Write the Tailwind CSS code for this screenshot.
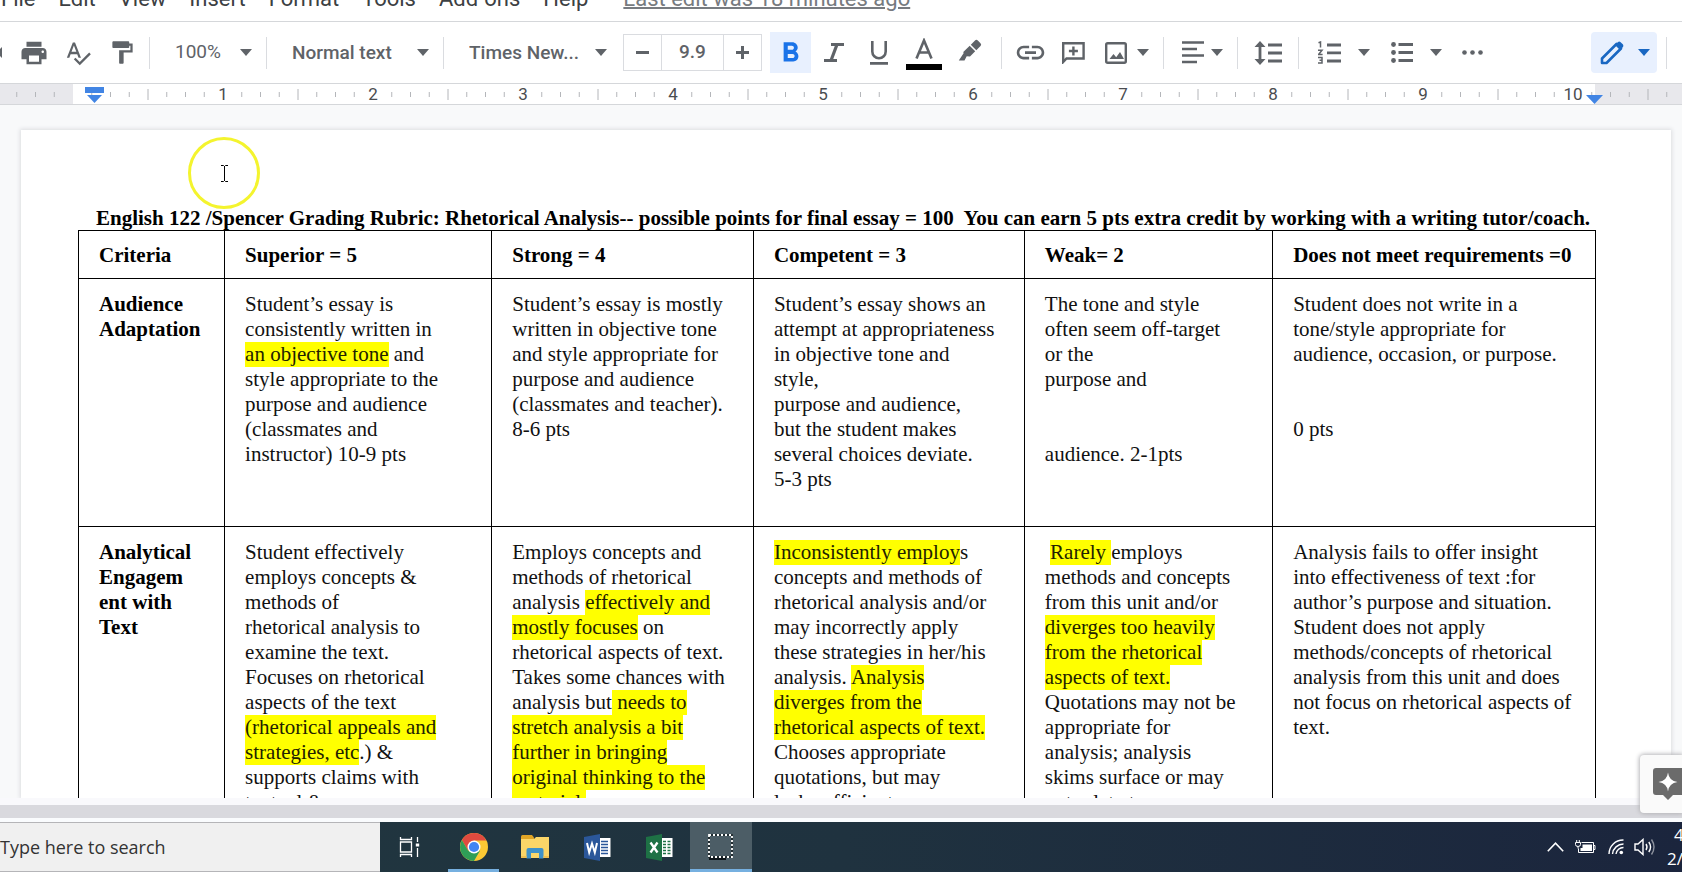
<!DOCTYPE html>
<html lang="en">
<head>
<meta charset="utf-8">
<title>Grading Rubric</title>
<script src="https://cdn.jsdelivr.net/npm/@tailwindcss/browser@4"></script>
</head>
<body class="h-screen overflow-hidden flex flex-col bg-white font-['Roboto',sans-serif] text-[#5f6368]">

<svg class="hidden">
  <symbol id="caret" viewBox="0 0 12 7"><path d="M0 0h12L6 7z" fill="currentColor"/></symbol>
</svg>

<!-- Menu bar -->
<nav class="h-[22px] shrink-0 overflow-hidden flex items-end gap-[23px] pl-px pb-[11px] border-b border-[#d5d7da] text-[22px] leading-[22px] text-[#3c4043] whitespace-nowrap">
  <button>File</button><button>Edit</button><button>View</button><button>Insert</button><button>Format</button><button>Tools</button><button>Add-ons</button><button>Help</button>
  <a href="#" class="ml-3 text-[#777b80] underline decoration-2">Last edit was 18 minutes ago</a>
</nav>

<!-- Toolbar -->
<div class="h-[62px] shrink-0 flex items-center border-b border-[#d5d7da] text-[19px]">
  <button class="w-3 h-10 flex items-center" aria-label="Redo"><svg class="w-[3px] h-3" viewBox="0 0 3 12" fill="currentColor"><path d="M2 0v11L0 9V2z"/></svg></button>
  <button class="w-11 h-10 grid place-items-center" aria-label="Print"><svg class="size-[30px]" viewBox="0 0 24 24" fill="currentColor"><path d="M19 8H5c-1.660 0-3 1.340-3 3v6h4v4h12v-4h4v-6c0-1.660-1.340-3-3-3zm-3 11H8v-5h8v5zm3-7c-.55 0-1-.45-1-1s.45-1 1-1 1 .45 1 1-.45 1-1 1zm-1-9H6v4h12V3z"/></svg></button>
  <button class="w-11 h-10 grid place-items-center" aria-label="Spelling"><svg class="size-7" viewBox="0 0 24 24" fill="currentColor"><path d="M12.450 16h2.090L9.430 3H7.570L2.460 16h2.090l1.120-3h5.640l1.140 3zm-6.020-5L8.500 5.480 10.570 11H6.430zm15.160.590l-8.090 8.090L9.830 16l-1.410 1.410 5.090 5.090L23 13l-1.410-1.410z"/></svg></button>
  <button class="w-11 h-10 grid place-items-center" aria-label="Paint format"><svg class="size-[27px]" viewBox="0 0 24 24" fill="currentColor"><path d="M18 4V3c0-.55-.45-1-1-1H4c-.55 0-1 .45-1 1v4c0 .55.45 1 1 1h13c.55 0 1-.45 1-1V6h1v4H9v11c0 .55.450 1 1 1h2c.55 0 1-.45 1-1v-9h8V4h-3z"/></svg></button>
  <i class="w-px h-8 mx-[5px] bg-[#dadce0]"></i>
  <label class="relative w-[106px] flex items-center">
    <select aria-label="Zoom" class="w-full h-10 pl-5 appearance-none bg-transparent"><option>100%</option></select>
    <svg class="absolute right-[9px] w-3 h-[7px] pointer-events-none"><use href="#caret"/></svg>
  </label>
  <i class="w-px h-8 mx-[5px] bg-[#dadce0]"></i>
  <label class="relative w-[166px] flex items-center">
    <select aria-label="Styles" class="w-full h-10 pl-5 pt-0.5 appearance-none bg-transparent font-medium"><option>Normal text</option></select>
    <svg class="absolute right-[9px] w-3 h-[7px] pointer-events-none"><use href="#caret"/></svg>
  </label>
  <i class="w-px h-8 mx-[5px] bg-[#dadce0]"></i>
  <label class="relative w-[167px] flex items-center">
    <select aria-label="Font" class="w-full h-10 pl-5 pt-0.5 appearance-none bg-transparent font-medium"><option>Times New...</option></select>
    <svg class="absolute right-[9px] w-3 h-[7px] pointer-events-none"><use href="#caret"/></svg>
  </label>
  <div class="ml-[7px] w-[139px] h-[37px] flex border border-[#dadce0]">
    <button class="w-[37px] grid place-items-center" aria-label="Decrease font size"><svg class="size-[13px]" viewBox="0 0 13 13"><path d="M0 6.500h13" stroke="currentColor" stroke-width="3"/></svg></button>
    <input aria-label="Font size" value="9.9" class="min-w-0 flex-1 text-center font-medium border-x border-[#dadce0]">
    <button class="w-[37px] grid place-items-center" aria-label="Increase font size"><svg class="size-[13px]" viewBox="0 0 13 13"><path d="M0 6.500h13M6.500 0v13" stroke="currentColor" stroke-width="3"/></svg></button>
  </div>
  <button class="ml-2 w-[41px] h-[41px] grid place-items-center bg-[#e8f0fe] text-[#1a73e8]" aria-label="Bold"><svg class="size-[33px]" viewBox="0 0 24 24" fill="currentColor"><path d="M15.600 11.290c.970-.67 1.650-1.770 1.650-2.790 0-2.260-1.750-4-4-4H7v14h7.040c2.090 0 3.710-1.700 3.710-3.790 0-1.520-.86-2.820-2.150-3.420zM10 7h3c.830 0 1.500.67 1.500 1.500S13.830 10 13 10h-3V7zm3.500 9H10v-3h3.500c.83 0 1.500.67 1.500 1.500s-.67 1.500-1.500 1.500z"/></svg></button>
  <button class="w-[46px] h-10 grid place-items-center" aria-label="Italic"><svg class="w-5 h-[19px]" viewBox="0 0 20 19"><path d="M7 1.500h13M0 17.500h13M13 1.500L7 17.500" stroke="currentColor" stroke-width="3.200"/></svg></button>
  <button class="w-11 h-10 grid place-items-center" aria-label="Underline"><svg class="w-5 h-6" viewBox="0 0 20 24" fill="none" stroke="currentColor" stroke-width="2.600"><path d="M3.300 0v10.500a6.700 6.700 0 0 0 13.400 0V0M1 22.400h18"/></svg></button>
  <button class="w-[46px] h-10 pt-0.5 grid place-items-center" aria-label="Text color"><svg class="w-9 h-8" viewBox="0 0 36 32"><path d="M10.500 20.500L18 2.500l7.500 18M13 14.500h10" fill="none" stroke="currentColor" stroke-width="2.600"/><path d="M0 26h36v6H0z" fill="#000"/></svg></button>
  <button class="w-[46px] h-10 pb-1 grid place-items-center" aria-label="Highlight color"><svg class="w-6 h-[26px]" viewBox="0 0 24 26" fill="currentColor"><path d="M17 2.500a2 2 0 0 1 2.800 0l2.700 2.700a2 2 0 0 1 0 2.800l-4.200 4.200-5.500-5.500zM11.700 7.800l5.500 5.500-5.200 5.200-3.300-.2L6.500 22.500H.8l4.800-7.300-.3-1.200z"/></svg></button>
  <i class="w-px h-8 ml-2 mr-[6px] bg-[#dadce0]"></i>
  <button class="w-11 h-10 grid place-items-center" aria-label="Insert link"><svg class="size-[33px]" viewBox="0 0 24 24" fill="currentColor"><path d="M3.900 12c0-1.710 1.390-3.100 3.100-3.100h4V7H7c-2.760 0-5 2.240-5 5s2.240 5 5 5h4v-1.900H7c-1.710 0-3.100-1.390-3.100-3.100zM8 13h8v-2H8v2zm9-6h-4v1.900h4c1.710 0 3.100 1.390 3.100 3.100s-1.390 3.100-3.100 3.100h-4V17h4c2.760 0 5-2.240 5-5s-2.240-5-5-5z"/></svg></button>
  <button class="w-[42px] h-10 grid place-items-center" aria-label="Add comment"><svg class="w-[23px] h-[22px]" viewBox="0 0 23 22" fill="none" stroke="currentColor" stroke-width="2.400"><path d="M1.200 20V1.200h20.400v15.300H4.500z"/><path d="M11.400 4.500v9M6.900 9h9"/></svg></button>
  <button class="w-[65px] h-10 flex items-center gap-[10px] pl-[11px]" aria-label="Insert image"><svg class="size-[22px]" viewBox="0 0 22 22" fill="none" stroke="currentColor" stroke-width="2.400"><rect x="1.200" y="1.200" width="19.600" height="19.600" rx="1.500"/><path d="M4.500 17l4-5 2.700 3.200L15 10l4 7z" fill="currentColor" stroke="none"/></svg><svg class="w-3 h-[7px]"><use href="#caret"/></svg></button>
  <i class="w-px h-8 ml-1 mr-[5px] bg-[#dadce0]"></i>
  <button class="w-16 h-10 flex items-center gap-[7px] pl-[13px]" aria-label="Align"><svg class="w-[22px] h-[23px]" viewBox="0 0 22 23" stroke="currentColor" stroke-width="2.500"><path d="M0 1.500h22M0 8h15M0 14.500h22M0 21h15"/></svg><svg class="w-3 h-[7px]"><use href="#caret"/></svg></button>
  <i class="w-px h-8 mx-1 bg-[#dadce0]"></i>
  <button class="w-[52px] h-10 grid place-items-center" aria-label="Line spacing"><svg class="w-7 h-6" viewBox="0 0 28 24" stroke="currentColor" stroke-width="2.800" fill="none"><path d="M14 4h14M14 12h14M14 20h14M6 4v16"/><path d="M6 0l5.500 6H.5zM6 24l5.500-6H.5z" fill="currentColor" stroke="none"/></svg></button>
  <i class="w-px h-8 mx-1 bg-[#dadce0]"></i>
  <button class="w-[76px] h-10 flex items-center gap-[17px] pl-[15px]" aria-label="Numbered list"><svg class="w-[23px] h-[23px]" viewBox="0 0 23 23" fill="none" stroke="currentColor"><path d="M9 4h14M9 11.800h14M9 20h14" stroke-width="2.800"/><path d="M.5 1.800l2-.8v5.500M0 9.300h4L.6 13.500h4M0 16.500h4v5.500H0M1.500 19.200H4" stroke-width="1.500"/></svg><svg class="w-3 h-[7px]"><use href="#caret"/></svg></button>
  <button class="w-[72px] h-10 flex items-center gap-[17px] pl-3" aria-label="Bulleted list"><svg class="w-[22px] h-[23px]" viewBox="0 0 22 23"><path d="M7.500 3.500H22M7.500 11.500H22M7.500 19.500H22" stroke="currentColor" stroke-width="2.800"/><g fill="currentColor"><circle cx="2.500" cy="3.500" r="2.400"/><circle cx="2.500" cy="11.500" r="2.400"/><circle cx="2.500" cy="19.500" r="2.400"/></g></svg><svg class="w-3 h-[7px]"><use href="#caret"/></svg></button>
  <button class="w-[42px] h-10 grid place-items-center" aria-label="More"><svg class="w-[21px] h-[5px]" viewBox="0 0 21 5" fill="currentColor"><circle cx="2.500" cy="2.500" r="2.300"/><circle cx="10.500" cy="2.500" r="2.300"/><circle cx="18.500" cy="2.500" r="2.300"/></svg></button>
  <button class="ml-auto w-[66px] h-[41px] flex items-center gap-[14px] pl-[9px] rounded bg-[#e8f0fe] text-[#1967c2]" aria-label="Editing mode"><svg class="size-6" viewBox="0 0 24 24"><path d="M2 22v-4.500L16.500 3 21 7.500 6.500 22z" fill="none" stroke="currentColor" stroke-width="2.600" stroke-linejoin="round"/><path d="M15 4l3-3q1.200-.8 2.400 0l2.600 2.600q.8 1.200 0 2.400l-3 3z" fill="currentColor"/></svg><svg class="w-3 h-[7px]"><use href="#caret"/></svg></button>
  <i class="w-px h-8 ml-[9px] mr-[15px] bg-[#dadce0]"></i>
</div>

<!-- Ruler -->
<div class="relative h-[21px] shrink-0 flex border-b border-[#d5d7da] bg-white overflow-hidden text-[17px] leading-[21px] text-[#4a4c50]">
  <div class="w-[73px] shrink-0 bg-[#e8e8ec]"></div>
  <div class="flex-1"></div>
  <div class="w-[87px] shrink-0 bg-[#e8e8ec]"></div>
  <svg class="absolute inset-0 w-full h-full">
    <defs><pattern id="ticks" x="73" width="150" height="21" patternUnits="userSpaceOnUse"><path d="M18.750 8v5M37.500 8v5M56.250 8v5M93.750 8v5M112.500 8v5M131.250 8v5M75 5v11" stroke="#b4b6ba"/></pattern></defs>
    <rect width="100%" height="21" fill="url(#ticks)"/>
  </svg>
  <div class="absolute left-[148px] top-0 flex text-center">
    <span class="w-[150px]">1</span><span class="w-[150px]">2</span><span class="w-[150px]">3</span><span class="w-[150px]">4</span><span class="w-[150px]">5</span><span class="w-[150px]">6</span><span class="w-[150px]">7</span><span class="w-[150px]">8</span><span class="w-[150px]">9</span><span class="w-[150px]">10</span>
  </div>
  <svg class="absolute left-[85px] top-[3px] w-[19px] h-4" viewBox="0 0 19 16" fill="#4285e4"><path d="M0 0h19v6H0zM2 8h15l-7.500 8z"/></svg>
  <svg class="absolute right-[79px] top-[11px] w-[17px] h-[9px]" viewBox="0 0 17 9" fill="#4285e4"><path d="M0 0h17L8.500 9z"/></svg>
</div>

<!-- Document -->
<main class="relative flex-1 min-h-0 overflow-hidden bg-[#f8f9fa] pt-[25px] pl-[21px] pr-[11px]">
  <article class="h-full bg-white shadow-[0_0_4px_1px_#dcdde0] pt-[76px] pl-[57px] pr-[75px] font-['Liberation_Serif',serif] text-[21px] leading-[25px] text-[#111]">
    <h1 class="pl-[18px] h-6 font-bold whitespace-pre text-black">English 122 /Spencer Grading Rubric: Rhetorical Analysis-- possible points for final essay = 100  You can earn 5 pts extra credit by working with a writing tutor/coach.</h1>
    <table class="w-full table-fixed border-collapse text-left whitespace-nowrap [&_td]:border [&_th]:border [&_td]:border-black [&_th]:border-black [&_td]:align-top [&_td]:pl-5 [&_th]:pl-5 [&_td]:pt-[13px] [&_mark]:bg-[#ffff00] [&_mark]:text-[#222200] [&_mark]:pb-px">
      <colgroup><col class="w-[9.630%]"><col class="w-[17.610%]"><col class="w-[17.250%]"><col class="w-[17.860%]"><col class="w-[16.370%]"><col></colgroup>
      <thead>
        <tr class="h-12 text-black [&>th]:pt-0.5"><th>Criteria</th><th>Superior = 5</th><th>Strong = 4</th><th>Competent = 3</th><th>Weak= 2</th><th>Does not meet requirements =0</th></tr>
      </thead>
      <tbody>
        <tr class="h-[248px]">
          <th class="align-top pt-[13px] text-black" scope="row">Audience<br>Adaptation</th>
          <td>Student’s essay is<br>consistently written in<br><mark>an objective tone</mark> and<br>style appropriate to the<br>purpose and audience<br>(classmates and<br>instructor) 10-9 pts</td>
          <td>Student’s essay is mostly<br>written in objective tone<br>and style appropriate for<br>purpose and audience<br>(classmates and teacher).<br>8-6 pts</td>
          <td>Student’s essay shows an<br>attempt at appropriateness<br>in objective tone and<br>style,<br>purpose and audience,<br>but the student makes<br>several choices deviate.<br>5-3 pts</td>
          <td>The tone and style<br>often seem off-target<br>or the<br>purpose and<br><br><br>audience. 2-1pts</td>
          <td>Student does not write in a<br>tone/style appropriate for<br>audience, occasion, or purpose.<br><br><br>0 pts</td>
        </tr>
        <tr>
          <th class="align-top pt-[13px] text-black" scope="row">Analytical<br>Engagem<br>ent with<br>Text</th>
          <td>Student effectively<br>employs concepts &amp;<br>methods of<br>rhetorical analysis to<br>examine the text.<br>Focuses on rhetorical<br>aspects of the text<br><mark>(rhetorical appeals and<br>strategies, etc</mark>.) &amp;<br>supports claims with<br>textual &amp;</td>
          <td>Employs concepts and<br>methods of rhetorical<br>analysis <mark>effectively and<br>mostly focuses</mark> on<br>rhetorical aspects of text.<br>Takes some chances with<br>analysis but<mark> needs to<br>stretch analysis a bit<br>further in bringing<br>original thinking to the<br>material.</mark></td>
          <td><mark>Inconsistently employ</mark>s<br>concepts and methods of<br>rhetorical analysis and/or<br>may incorrectly apply<br>these strategies in her/his<br>analysis. <mark>Analysis<br>diverges from the<br>rhetorical aspects of text.</mark><br>Chooses appropriate<br>quotations, but may<br>lack sufficient</td>
          <td>&nbsp;<mark>Rarely </mark>employs<br>methods and concepts<br>from this unit and/or<br><mark>diverges too heavily<br>from the rhetorical<br>aspects of text.</mark><br>Quotations may not be<br>appropriate for<br>analysis; analysis<br>skims surface or may<br>not relate to purpose</td>
          <td>Analysis fails to offer insight<br>into effectiveness of text :for<br>author’s purpose and situation.<br>Student does not apply<br>methods/concepts of rhetorical<br>analysis from this unit and does<br>not focus on rhetorical aspects of<br>text.</td>
        </tr>
      </tbody>
    </table>
  </article>
  <!-- Pointer with highlight ring -->
  <div class="absolute left-[188px] top-8 size-[72px] rounded-full border-[3px] border-[#f4f42e] grid place-items-center">
    <svg class="w-[9px] h-[17px]" viewBox="0 0 9 17" fill="none" stroke="#000"><path d="M1 .5h2.500l1 1 1-1H8M4.500 1v15M1 16.500h2.500l1-1 1 1H8"/></svg>
  </div>
</main>

<!-- Window bottom edge -->
<div class="relative shrink-0">
  <div class="h-[7px] bg-[#f9f9fc]"></div>
  <div class="h-[13px] bg-[#d9d9de]"></div>
  <div class="h-1 bg-[#fafcfe]"></div>
  <button class="absolute right-0 bottom-[9px] w-[42px] h-[58px] pl-[13px] flex items-center rounded-l bg-[#fafafa] shadow-[0_0_4px_1px_#b5b5b8] overflow-hidden" aria-label="Explore"><svg class="w-[30px] h-8 shrink-0" viewBox="0 0 30 32"><path d="M3 0h27v27H20l-5 5-5-5H3q-3 0-3-3V3q0-3 3-3z" fill="#6b6b6b"/><path d="M15 4.500Q16 13 24.500 14 16 15 15 23.500 14 15 5.500 14 14 13 15 4.500z" fill="#fff"/></svg></button>
</div>

<!-- Taskbar -->
<footer class="h-[50px] shrink-0 flex bg-linear-to-r from-[#21373f] via-[#1f323f] to-[#1b253d] text-white font-['Open_Sans',sans-serif] overflow-hidden">
  <input aria-label="Search" placeholder="Type here to search" class="w-[380px] shrink-0 bg-[#f0f0f0] border-y border-[#b5b5b8] text-[18px] placeholder:text-[#333]">
  <button class="w-[59px] grid place-items-center" aria-label="Task view"><svg class="w-[21px] h-5" viewBox="0 0 21 20" fill="none" stroke="#fff" stroke-width="1.300"><path d="M1.500 0v2.500h11V0M1.500 5h11v10h-11zM1.500 20v-2.500h11V20M18.500 0v5M18.500 11v9"/><path d="M16.800 6.500h3.400v3h-3.400z" fill="#fff" stroke="none"/></svg></button>
  <button class="ml-[9px] w-[51px] grid place-items-center border-b-[3px] border-[#76b0e0] pt-[3px]" aria-label="Chrome"><svg class="size-7" viewBox="0 0 28 28"><circle cx="14" cy="14" r="14" fill="#fcc934"/><path d="M14 14V7.500h12.400A14 14 0 0 0 1.900 7L8 17.500z" fill="#e04a3f"/><path d="M1.900 7A14 14 0 0 0 14 28l6.100-10.500L14 20 8 17.500z" fill="#2f9e57"/><circle cx="14" cy="14" r="6.500" fill="#fff"/><circle cx="14" cy="14" r="5.100" fill="#4285f4"/></svg></button>
  <button class="ml-[5px] w-[62px] grid place-items-center" aria-label="File Explorer"><svg class="w-7 h-6" viewBox="0 0 28 24"><path d="M0 1.500Q0 0 1.500 0H11l2 2.500V6H0z" fill="#e0a526"/><path d="M0 4h13l2-2h13v21H0z" fill="#fbd668"/><path d="M5.500 23.500V15q0-2 2-2h13q2 0 2 2v8.500h-4.500V18h-8v5.500z" fill="#3f92c9"/><path d="M0 21h5.500v2H0zM22.500 21H28v2h-5.500z" fill="#f0c050"/></svg></button>
  <button class="w-[62px] grid place-items-center" aria-label="Word"><svg class="w-[27px] h-[27px]" viewBox="0 0 27 27"><path d="M15 4h11.500v19H15z" fill="#fff"/><path d="M17 7.500h7M17 10.500h7M17 13.500h7M17 16.500h7M17 19.500h7" stroke="#2b579a" stroke-width="1.300"/><path d="M0 3L16 0v27L0 24z" fill="#2b579a"/><path d="M3 9l2.200 9.500L8 9.500l2.800 9L13 9" fill="none" stroke="#fff" stroke-width="2"/></svg></button>
  <button class="w-[62px] grid place-items-center" aria-label="Excel"><svg class="w-[27px] h-[27px]" viewBox="0 0 27 27"><path d="M15 4h11.500v19H15z" fill="#fff"/><path d="M17 7.500h3M21.500 7.500h3M17 10.500h3M21.500 10.500h3M17 13.500h3M21.500 13.500h3M17 16.500h3M21.500 16.500h3M17 19.500h3M21.500 19.500h3" stroke="#1e7145" stroke-width="1.600"/><path d="M0 3L16 0v27L0 24z" fill="#1e7145"/><path d="M4.500 8.500l7 10M11.500 8.500l-7 10" stroke="#fff" stroke-width="2.300"/></svg></button>
  <button class="w-[62px] grid place-items-center bg-[#4c5d66] border-b-[3px] border-[#76b0e0] pt-[3px]" aria-label="Screen recorder"><svg class="w-[26px] h-[26px]" viewBox="0 0 26 26" fill="none"><path d="M1 24.500h17" stroke="#0c1419" stroke-width="3"/><rect x="1" y="1" width="23" height="22" stroke="#1c262b" stroke-width="1.800"/><rect x="1" y="1" width="23" height="22" stroke="#fff" stroke-width="1.800" stroke-dasharray="2 2"/></svg></button>
  <div class="ml-auto flex items-center">
    <button class="w-[18px] mr-[10px]" aria-label="Show hidden icons"><svg class="w-[17px] h-[10px]" viewBox="0 0 17 10" fill="none" stroke="#fff" stroke-width="1.600"><path d="M.8 9.200L8.500 1.200l7.700 8"/></svg></button>
    <svg class="w-[21px] h-4 mr-3" viewBox="0 0 21 16" fill="none" stroke="#fff"><path d="M6.500 3.500h12v10h-15V9.500M18.500 6.500h1.500v4h-1.500"/><path d="M7.500 5.500h9.500v6.500H5.500V9h2z" fill="#fff" stroke="none"/><path d="M.5 3.500h5v2q0 2-2.500 2t-2.500-2zM1.700 1v2.500M4.300 1v2.500M3 7.500v2"/></svg>
    <svg class="w-4 h-4 mr-[10px]" viewBox="0 0 16 16" fill="none" stroke="#fff" stroke-width="1.400"><path d="M1 15A14 14 0 0 1 15.500 1M4.500 15A11 11 0 0 1 15.500 5M8 15a7.500 7.500 0 0 1 7.500-6.500"/><circle cx="13.300" cy="13.500" r="1.800" fill="#fff" stroke="none"/></svg>
    <svg class="w-[21px] h-[18px] mr-3" viewBox="0 0 21 18" fill="none" stroke="#fff" stroke-width="1.400"><path d="M1 6h3l5-4.500v15L4 12H1z"/><path d="M12 6q2 3 0 6M14.800 4q3.500 5 0 10"/><path d="M17.500 1.500q5 7.500 0 15" opacity=".5"/></svg>
    <div class="w-[15px] shrink-0 flex flex-col items-end text-[17px] leading-6 overflow-hidden"><span class="w-2">4</span><span class="w-[15px]">2/</span></div>
  </div>
</footer>
</body>
</html>
